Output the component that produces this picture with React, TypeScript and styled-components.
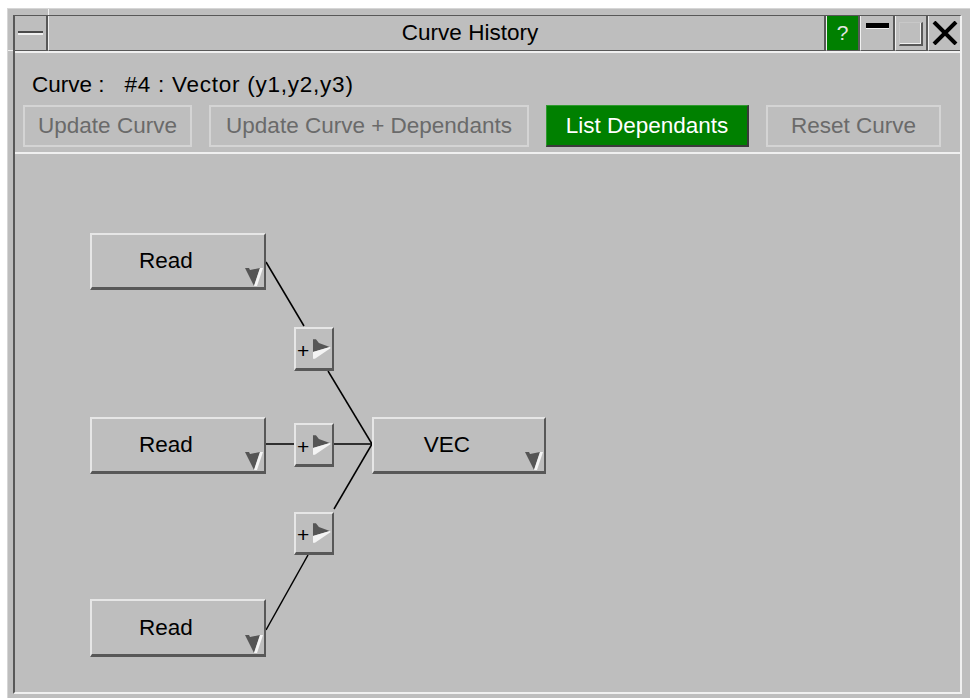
import React from 'react';
import styled, { createGlobalStyle } from 'styled-components';

const GRAY = '#bebebe';
const DARK = '#585858';
const LIGHT = '#f0f0f0';
const FONT = '"Liberation Sans", Arial, Helvetica, sans-serif';

const GlobalStyle = createGlobalStyle`
  html, body {
    margin: 0;
    padding: 0;
    background: #ffffff;
    overflow: hidden;
  }
  body {
    font-family: ${FONT};
  }
`;

const Window = styled.div`
  position: relative;
  box-sizing: border-box;
  margin: 8px 0 0 7px;
  width: 966px;
  height: 690px;
  padding: 6px 11px 4px 5px;
  background: ${GRAY};
  border-top: 1px solid #d6d6d6;
  border-left: 1px solid #d6d6d6;

  /* resize-corner notches on the frame */
  &::before {
    content: '';
    position: absolute;
    left: 40px;
    top: 0;
    width: 1px;
    height: 6px;
    background: ${LIGHT};
  }
  &::after {
    content: '';
    position: absolute;
    left: 0;
    top: 41px;
    width: 5px;
    height: 1px;
    background: ${LIGHT};
  }
`;

const Inner = styled.div`
  box-sizing: border-box;
  height: 100%;
  display: flex;
  flex-direction: column;
  border-top: 1px solid ${DARK};
  border-left: 2px solid ${DARK};
  border-right: 2px solid ${LIGHT};
  border-bottom: 2px solid ${LIGHT};
`;

const TitleBar = styled.div`
  display: flex;
  height: 35px;
  flex: none;
`;

const TitleSegment = styled.div<{ $width?: number; $green?: boolean; $first?: boolean; $last?: boolean }>`
  box-sizing: border-box;
  height: 100%;
  ${p => (p.$width ? `width: ${p.$width}px; flex: none;` : 'flex: 1;')}
  display: flex;
  align-items: center;
  justify-content: center;
  background: ${p => (p.$green ? '#008000' : GRAY)};
  border-bottom: 1px solid ${DARK};
  border-left: ${p => (p.$first ? 'none' : `1px solid ${LIGHT}`)};
  border-right: ${p => (p.$last ? 'none' : `2px solid ${DARK}`)};
`;

const TitleText = styled.span`
  padding-left: 67px;
  font-size: 22.5px;
  color: #000;
  white-space: nowrap;
`;

const HelpMark = styled.span`
  font-size: 21px;
  color: #e4e4e4;
`;

const MenuBar = styled.div`
  width: 25px;
  height: 2px;
  background: #4a4a4a;
  border-bottom: 2px solid ${LIGHT};
`;

const MinBar = styled.div`
  align-self: flex-start;
  margin-top: 7px;
  width: 23px;
  height: 5px;
  background: #000;
  border-bottom: 1px solid ${LIGHT};
`;

const MaxBox = styled.div`
  box-sizing: border-box;
  width: 24px;
  height: 24px;
  margin-top: 2px;
  border-top: 1px solid #c8c8c8;
  border-left: 1px solid #c8c8c8;
  border-right: 2px solid ${DARK};
  border-bottom: 2px solid ${DARK};
  box-shadow: inset -1px -1px 0 ${LIGHT};
`;

const Content = styled.div`
  flex: 1;
  display: flex;
  flex-direction: column;
  border-top: 2px solid ${LIGHT};
  min-height: 0;
`;

const Header = styled.div`
  flex: none;
  display: flex;
  flex-direction: column;
  gap: 7px;
  padding: 19px 0 5px 8px;
  border-bottom: 2px solid ${LIGHT};
`;

const CurveLine = styled.div`
  display: flex;
  gap: 20px;
  height: 26px;
  line-height: 26px;
  padding-left: 9px;
  font-size: 22.5px;
  color: #000;
  white-space: nowrap;
`;

const CurveValue = styled.span`
  letter-spacing: 0.75px;
`;

const ButtonRow = styled.div`
  display: flex;
  gap: 17px;
`;

const ActionButton = styled.div<{ $width: number; $active?: boolean }>`
  box-sizing: border-box;
  width: ${p => p.$width}px;
  height: 42px;
  display: flex;
  align-items: center;
  justify-content: center;
  font-size: 22.5px;
  white-space: nowrap;
  ${p =>
    p.$active
      ? `
    background: #008000;
    color: #ffffff;
    border-top: 1px solid #2f9a2f;
    border-left: 1px solid #2f9a2f;
    border-right: 2px solid #3a3a3a;
    border-bottom: 2px solid #3a3a3a;
  `
      : `
    background: ${GRAY};
    color: #6a6a6a;
    border: 2px solid #d4d4d4;
  `}
`;

const Canvas = styled.div`
  position: relative;
  flex: 1;
`;

const Links = styled.svg`
  position: absolute;
  inset: 0;
  width: 100%;
  height: 100%;
  pointer-events: none;
`;

const Node = styled.div<{ $x: number; $y: number; $w: number; $h: number }>`
  position: absolute;
  left: ${p => p.$x}px;
  top: ${p => p.$y}px;
  width: ${p => p.$w}px;
  height: ${p => p.$h}px;
  box-sizing: border-box;
  display: flex;
  align-items: center;
  justify-content: center;
  padding: 0 24px 0 0;
  font-size: 22.5px;
  color: #000;
  background: ${GRAY};
  border-top: 2px solid #e6e6e6;
  border-left: 2px solid #e6e6e6;
  border-right: 2px solid ${DARK};
  border-bottom: 3px solid ${DARK};
`;

const NodeArrow = styled.svg`
  position: absolute;
  right: 0;
  bottom: 0;
`;

const PlusBox = styled.div<{ $x: number; $y: number; $h: number }>`
  position: absolute;
  left: ${p => p.$x}px;
  top: ${p => p.$y}px;
  width: 40px;
  height: ${p => p.$h}px;
  box-sizing: border-box;
  display: flex;
  align-items: center;
  gap: 3px;
  padding-left: 1px;
  background: ${GRAY};
  border-top: 2px solid #e6e6e6;
  border-left: 2px solid #e6e6e6;
  border-right: 2px solid ${DARK};
  border-bottom: 3px solid ${DARK};
`;

const PlusSign = styled.span`
  font-size: 21px;
  color: #000;
  line-height: 1;
  margin-top: 3px;
`;

const Triangle = () => (
  <NodeArrow width="19" height="20" viewBox="0 0 19 20">
    <polygon points="0,1 4,1 5,3 15,1 9,19" fill="#555" />
    <polygon points="15,1 18,1 12,19 9,19" fill="#f4f4f4" />
  </NodeArrow>
);

const Flag = () => (
  <svg width="20" height="22" viewBox="0 0 20 22">
    <polygon points="1,1 4,1 7,5 18,9 1,14" fill="#555" />
    <polygon points="1,14 18,9 19,10 3,21 1,21" fill="#f4f4f4" />
  </svg>
);

const reads = [79, 263, 445];
const plusBoxes = [
  { y: 173, h: 44 },
  { y: 269, h: 44 },
  { y: 358, h: 43 },
];
const links = [
  [251, 108, 289, 172],
  [313, 217, 357, 290],
  [251, 290, 280, 290],
  [319, 290, 357, 290],
  [319, 355, 357, 290],
  [293, 401, 251, 476],
];

const buttons = [
  { label: 'Update Curve', width: 169 },
  { label: 'Update Curve + Dependants', width: 320 },
  { label: 'List Dependants', width: 203, active: true },
  { label: 'Reset Curve', width: 175 },
];

export default function App() {
  return (
    <>
      <GlobalStyle />
      <Window>
        <Inner>
          <TitleBar>
            <TitleSegment $width={33} $first>
              <MenuBar />
            </TitleSegment>
            <TitleSegment>
              <TitleText>Curve History</TitleText>
            </TitleSegment>
            <TitleSegment $width={34} $green>
              <HelpMark>?</HelpMark>
            </TitleSegment>
            <TitleSegment $width={35}>
              <MinBar />
            </TitleSegment>
            <TitleSegment $width={33}>
              <MaxBox />
            </TitleSegment>
            <TitleSegment $width={32} $last>
              <svg width="26" height="24" viewBox="0 0 26 24">
                <path d="M2 1 L24 23 M24 1 L2 23" stroke="#000" strokeWidth="4" />
              </svg>
            </TitleSegment>
          </TitleBar>

          <Content>
            <Header>
              <CurveLine>
                <span>Curve :</span>
                <CurveValue>#4 : Vector (y1,y2,y3)</CurveValue>
              </CurveLine>
              <ButtonRow>
                {buttons.map(b => (
                  <ActionButton key={b.label} $width={b.width} $active={b.active}>
                    {b.label}
                  </ActionButton>
                ))}
              </ButtonRow>
            </Header>

            <Canvas>
              <Links>
                {links.map(([x1, y1, x2, y2], i) => (
                  <line key={i} x1={x1} y1={y1} x2={x2} y2={y2} stroke="#000" strokeWidth="1.5" />
                ))}
              </Links>

              {reads.map((y, i) => (
                <Node key={i} $x={75} $y={y} $w={176} $h={i === 2 ? 58 : 57}>
                  Read
                  <Triangle />
                </Node>
              ))}

              {plusBoxes.map((b, i) => (
                <PlusBox key={i} $x={279} $y={b.y} $h={b.h}>
                  <PlusSign>+</PlusSign>
                  <Flag />
                </PlusBox>
              ))}

              <Node $x={357} $y={263} $w={174} $h={57}>
                VEC
                <Triangle />
              </Node>
            </Canvas>
          </Content>
        </Inner>
      </Window>
    </>
  );
}
